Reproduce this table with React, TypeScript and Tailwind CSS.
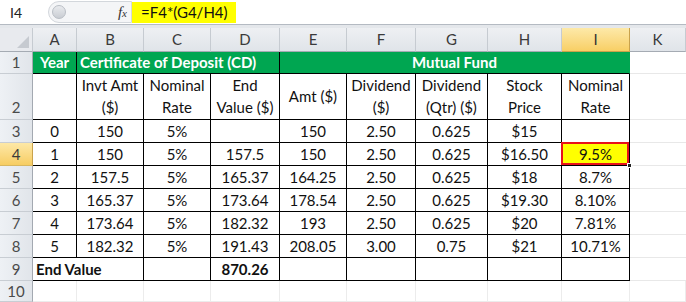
import type { ReactNode } from 'react';

const font = { fontFamily: 'Lato, "Open Sans", sans-serif' };

const colHeaders = ['A', 'B', 'C', 'D', 'E', 'F', 'G', 'H', 'I', 'K'];

const dataRows: (string | number)[][] = [
  [0, 150, '5%', '', 150, '2.50', '0.625', '$15', ''],
  [1, 150, '5%', '157.5', 150, '2.50', '0.625', '$16.50', '9.5%'],
  [2, '157.5', '5%', '165.37', '164.25', '2.50', '0.625', '$18', '8.7%'],
  [3, '165.37', '5%', '173.64', '178.54', '2.50', '0.625', '$19.30', '8.10%'],
  [4, '173.64', '5%', '182.32', '193', '2.50', '0.625', '$20', '7.81%'],
  [5, '182.32', '5%', '191.43', '208.05', '3.00', '0.75', '$21', '10.71%'],
];

const Cell = ({ children, className = '' }: { children?: ReactNode; className?: string }) => (
  <div className={`flex items-center justify-center border-r border-b border-black text-[15px] text-[#111] whitespace-nowrap ${className}`}>
    {children}
  </div>
);

const RowHead = ({ n, active = false, className = '' }: { n: number; active?: boolean; className?: string }) => (
  <div
    className={`flex justify-center border-r border-b text-[15px] ${
      active
        ? 'bg-gradient-to-b from-[#fde8a6] to-[#f7cd62] border-r-[#c9a24b] border-b-[#d8b760] text-[#3a3a3a]'
        : 'bg-gradient-to-r from-[#eef1f5] to-[#e1e5ea] border-r-[#a3a9b1] border-b-[#c8cdd3] text-[#4a4a4a]'
    } ${className}`}
  >
    {n}
  </div>
);

export default function App() {
  return (
    <div className="w-[686px] h-[302px] overflow-hidden bg-white" style={font}>
      {/* formula bar */}
      <div className="h-[25px] flex items-center bg-white border-b border-[#b4bac2]">
        <div className="w-[48px] h-full pl-[10px] flex items-center text-[14px] text-[#222]">I4</div>
        <div className="relative w-[84px] h-[22px] rounded-l-full bg-[#f4f5f7] border border-[#d3d7dc] flex items-center justify-end pr-[4px]">
          <div className="absolute left-[3px] top-[3px] w-[14px] h-[14px] rounded-full bg-gradient-to-b from-[#e9ebee] to-[#c9cdd3] border border-[#b9bec5]" />
          <span className="text-[15px] italic text-[#333]" style={{ fontFamily: '"Liberation Serif", serif' }}>
            f<span className="text-[11px]">x</span>
          </span>
        </div>
        <div className="h-[21px] bg-[#ffff00] flex items-center pl-[9px] pr-[8px] text-[15px] text-[#111] whitespace-nowrap">=F4*(G4/H4)</div>
      </div>
      <div className="h-[3px] bg-[#e4e7eb]" />

      {/* sheet grid */}
      <div className="grid grid-cols-[33px_44px_67px_67px_69px_67px_69px_72px_74px_68px_56px] grid-rows-[24px_22px_46px_repeat(7,23px)_21px]">
        {/* column headers */}
        <div className="relative bg-[#e8eaee] border-r border-b border-r-[#c6cbd1] border-b-[#a5abb3]">
          <svg className="absolute right-[3px] bottom-[3px]" width="12" height="12" viewBox="0 0 12 12">
            <polygon points="12,0 12,12 0,12" fill="#c6cad0" />
          </svg>
        </div>
        {colHeaders.map((c) => (
          <div
            key={c}
            className={`flex items-center justify-center border-r border-b text-[15px] ${
              c === 'I'
                ? 'bg-gradient-to-b from-[#fde9a8] to-[#f8cf64] border-r-[#c9a24b] border-b-[#c9a24b] text-[#333]'
                : 'bg-gradient-to-b from-[#eef0f3] to-[#e0e4e9] border-r-[#c6cbd1] border-b-[#a5abb3] text-[#3a3a3a]'
            }`}
          >
            {c}
          </div>
        ))}

        {/* row 1 */}
        <RowHead n={1} className="items-center" />
        <Cell className="bg-[#00a651] text-white font-bold">Year</Cell>
        <Cell className="col-span-3 bg-[#00a651] text-white font-bold !justify-start pl-[3px]">Certificate of Deposit (CD)</Cell>
        <Cell className="col-span-5 bg-[#00a651] text-white font-bold border-r-[#00a651]">Mutual Fund</Cell>
        <div className="border-b border-[#e8e8e8]" />

        {/* row 2 */}
        <RowHead n={2} className="items-end leading-[23px]" />
        <Cell />
        <Cell className="flex-col !justify-end leading-[22px] pb-[1px]">
          <span>Invt Amt</span>
          <span>($)</span>
        </Cell>
        <Cell className="flex-col !justify-end leading-[22px] pb-[1px]">
          <span>Nominal</span>
          <span>Rate</span>
        </Cell>
        <Cell className="flex-col !justify-end leading-[22px] pb-[1px]">
          <span>End</span>
          <span>Value ($)</span>
        </Cell>
        <Cell>Amt ($)</Cell>
        <Cell className="flex-col !justify-end leading-[22px] pb-[1px]">
          <span>Dividend</span>
          <span>($)</span>
        </Cell>
        <Cell className="flex-col !justify-end leading-[22px] pb-[1px]">
          <span>Dividend</span>
          <span>(Qtr) ($)</span>
        </Cell>
        <Cell className="flex-col !justify-end leading-[22px] pb-[1px]">
          <span>Stock</span>
          <span>Price</span>
        </Cell>
        <Cell className="flex-col !justify-end leading-[22px] pb-[1px]">
          <span>Nominal</span>
          <span>Rate</span>
        </Cell>
        <div className="border-b border-[#e8e8e8]" />

        {/* rows 3-8 */}
        {dataRows.map((row, ri) => (
          <div key={ri} className="contents">
            <RowHead n={ri + 3} active={ri === 1} className="items-center" />
            {row.map((v, ci) =>
              ri === 1 && ci === 8 ? (
                <Cell key={ci} className="relative bg-[#ffff00]">
                  {v}
                  <span className="absolute -left-[1px] -top-[1px] w-[calc(100%+1px)] h-[calc(100%+1px)] border-2 border-[#e8121a] pointer-events-none" />
                  <span className="absolute -right-[3px] -bottom-[3px] w-[5px] h-[5px] bg-[#222] border border-white" />
                </Cell>
              ) : (
                <Cell key={ci}>{v}</Cell>
              )
            )}
            <div className="border-b border-[#e8e8e8]" />
          </div>
        ))}

        {/* row 9 */}
        <RowHead n={9} className="items-center" />
        <Cell className="col-span-2 font-bold !justify-start pl-[3px]">End Value</Cell>
        <Cell />
        <Cell className="font-bold">870.26</Cell>
        <Cell />
        <Cell />
        <Cell />
        <Cell />
        <Cell />
        <div className="border-b border-[#e8e8e8]" />

        {/* row 10 */}
        <RowHead n={10} className="items-center" />
        {Array.from({ length: 10 }).map((_, i) => (
          <div key={i} className="border-r border-b border-[#ececec]" />
        ))}
      </div>
    </div>
  );
}
